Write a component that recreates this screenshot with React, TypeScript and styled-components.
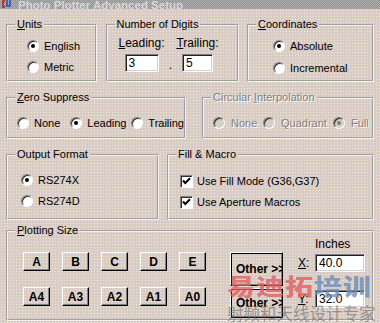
import React from 'react'
import styled, { createGlobalStyle } from 'styled-components'

const GlobalStyle = createGlobalStyle`
  html, body {
    margin: 0;
    padding: 0;
    background: #d6cdc8;
  }
`

const Window = styled.div`
  position: relative;
  width: 380px;
  height: 323px;
  overflow: hidden;
  background-color: #d8cbc8;
  background-image: radial-gradient(circle, #efeec2 0.7px, transparent 0.9px);
  background-size: 3px 3px;
  font-family: "Liberation Sans", Arial, sans-serif;
  font-size: 11px;
  color: #000;
`

const TitleBar = styled.div`
  height: 9px;
  overflow: hidden;
  display: flex;
  align-items: flex-end;
  gap: 7px;
  padding-left: 2px;
  background: repeating-conic-gradient(#8e8e8e 0 25%, #b4b4b4 0 50%) 0 0 / 2px 2px;
`

const TitleText = styled.span`
  font-weight: bold;
  font-size: 11.5px;
  line-height: 12px;
  color: #d8d8d8;
  margin-bottom: -2px;
`

const Body = styled.div`
  padding: 9px 6px 0 6px;
`

const Row = styled.div<{ $top?: number }>`
  display: flex;
  justify-content: space-between;
  align-items: flex-start;
  margin-top: ${(p) => p.$top ?? 0}px;
`

const Group = styled.fieldset<{ $w: number; $h: number }>`
  margin: 0;
  padding: 0;
  min-width: 0;
  box-sizing: border-box;
  width: ${(p) => p.$w}px;
  height: ${(p) => p.$h}px;
  border: 2px groove #f4f2f0;
`

const Legend = styled.legend<{ $disabled?: boolean }>`
  padding: 0 2px;
  margin-left: 7px;
  font-size: 11px;
  line-height: 13px;
  color: ${(p) => (p.$disabled ? '#808080' : '#000')};
  text-shadow: ${(p) => (p.$disabled ? '1px 1px 0 #fff' : 'none')};
`

const Key = styled.span`
  text-decoration: underline;
  text-underline-offset: 1px;
`

const Stack = styled.div<{ $pt: number; $pl: number; $gap: number }>`
  display: flex;
  flex-direction: column;
  gap: ${(p) => p.$gap}px;
  padding: ${(p) => p.$pt}px 0 0 ${(p) => p.$pl}px;
`

const Line = styled.div<{ $pt: number; $pl: number }>`
  display: flex;
  align-items: center;
  padding: ${(p) => p.$pt}px 0 0 ${(p) => p.$pl}px;
`

const Choice = styled.label<{ $w?: number; $gap?: number; $disabled?: boolean }>`
  display: flex;
  align-items: center;
  gap: ${(p) => p.$gap ?? (p.$disabled ? 6 : 5)}px;
  height: 20px;
  width: ${(p) => (p.$w ? `${p.$w}px` : 'auto')};
  color: ${(p) => (p.$disabled ? '#808080' : '#000')};
  text-shadow: ${(p) => (p.$disabled ? '1px 1px 0 #fff' : 'none')};
  white-space: nowrap;
`

const RadioDot = styled.span<{ $on?: boolean; $disabled?: boolean }>`
  position: relative;
  flex: none;
  width: 12px;
  height: 12px;
  box-sizing: border-box;
  border-radius: 50%;
  border: 1px solid;
  border-color: #808080 #ffffff #ffffff #808080;
  box-shadow: inset 1px 1px 0 #303030;
  background: ${(p) => (p.$disabled ? '#d4d0c8' : '#fff')};

  &::after {
    content: '';
    display: ${(p) => (p.$on ? 'block' : 'none')};
    position: absolute;
    left: 3px;
    top: 3px;
    width: 4px;
    height: 4px;
    border-radius: 50%;
    background: ${(p) => (p.$disabled ? '#808080' : '#000')};
  }
`

const CheckBox = styled.span`
  flex: none;
  display: flex;
  width: 13px;
  height: 13px;
  box-sizing: border-box;
  border: 1px solid;
  border-color: #808080 #ffffff #ffffff #808080;
  box-shadow: inset 1px 1px 0 #303030;
  background: #fff;
`

const Field = styled.div<{ $w: number }>`
  width: ${(p) => p.$w}px;
  height: 18px;
  box-sizing: border-box;
  border: 1px solid;
  border-color: #808080 #ffffff #ffffff #808080;
  box-shadow: inset 1px 1px 0 #202020, inset -1px -1px 0 #d4d0c8;
  background: #fff;
  padding: 0 3px;
  font-size: 12px;
  line-height: 16px;
`

const Digits = styled.div`
  display: flex;
  align-items: flex-end;
  padding: 6px 0 0 14px;
`

const DigitCol = styled.div<{ $w: number }>`
  display: flex;
  flex-direction: column;
  align-items: center;
  gap: 4px;
  width: ${(p) => p.$w}px;
  font-size: 12px;
  line-height: 13px;
`

const Dot = styled.span`
  width: 18px;
  text-align: center;
  line-height: 14px;
  font-size: 12px;
`

const Plot = styled.div`
  display: flex;
  align-items: flex-start;
  padding-left: 15px;
`

const SizeGrid = styled.div`
  display: grid;
  grid-template-columns: repeat(5, 27px);
  grid-auto-rows: 19px;
  column-gap: 12px;
  row-gap: 16px;
  margin-top: 15px;
`

const RaisedButton = styled.button`
  margin: 0;
  padding: 0;
  box-sizing: border-box;
  background: transparent;
  border: 1px solid;
  border-color: #ffffff #000000 #000000 #ffffff;
  box-shadow: inset -1px -1px 0 #808080;
  font-family: "Liberation Sans", Arial, sans-serif;
  font-weight: bold;
  font-size: 12px;
  color: #000;
`

const OtherCol = styled.div`
  display: flex;
  flex-direction: column;
  gap: 2px;
  margin: 15px 0 0 24px;
`

const OtherButton = styled(RaisedButton)<{ $h: number }>`
  width: 53px;
  height: ${(p) => p.$h}px;
  box-shadow: inset 1px 1px 0 #000, inset -1px -1px 0 #808080;
  text-align: left;
  padding-left: 5px;
  white-space: nowrap;
  overflow: hidden;
`

const Extent = styled.div`
  display: grid;
  grid-template-columns: 17px 50px;
  grid-template-rows: 14px 18px 18px;
  row-gap: 3px;
  margin-left: 15px;
  align-items: center;
  font-size: 12px;
`

const Axis = styled.span<{ $shift?: number }>`
  line-height: 18px;
  align-self: start;
  margin-top: ${(p) => p.$shift ?? 0}px;
`

const LowField = styled(Field)<{ $shift?: number }>`
  align-self: start;
  margin-top: ${(p) => p.$shift ?? 0}px;
`

const Watermark = styled.div`
  position: absolute;
  left: 227px;
  top: 273px;
  pointer-events: none;
  font-family: "Noto Sans CJK SC", sans-serif;
  white-space: nowrap;
`

const MarkTitle = styled.div`
  font-size: 28px;
  font-weight: 900;
  line-height: 30px;
  letter-spacing: 1px;
  transform: scaleY(0.8);
  transform-origin: left top;
`

const Red = styled.span`
  color: rgba(224, 96, 100, 0.8);
`

const Blue = styled.span`
  color: rgba(108, 140, 188, 0.8);
`

const MarkSub = styled.div`
  margin-top: 1px;
  font-size: 16.5px;
  line-height: 18px;
  color: rgba(110, 110, 110, 0.65);
`

const Radio = ({ label, on, w, disabled }: { label: string; on?: boolean; w?: number; disabled?: boolean }) => (
  <Choice $w={w} $disabled={disabled}>
    <RadioDot $on={on} $disabled={disabled} />
    {label}
  </Choice>
)

const Check = ({ label }: { label: string }) => (
  <Choice $gap={4}>
    <CheckBox>
      <svg width="11" height="11" viewBox="0 0 11 11">
        <path d="M2 4.5 L4.3 7 L9 2.3" stroke="#000" strokeWidth="2" fill="none" />
      </svg>
    </CheckBox>
    {label}
  </Choice>
)

const App = () => {
  const sizes = ['A', 'B', 'C', 'D', 'E', 'A4', 'A3', 'A2', 'A1', 'A0']

  return (
    <Window>
      <GlobalStyle />
      <TitleBar>
        <svg width="9" height="9" viewBox="0 0 9 9">
          <path d="M3 1 H1 V7 H3" stroke="#c01818" strokeWidth="1.5" fill="none" />
          <path d="M5 0 V6 H8 V0" stroke="#2050c0" strokeWidth="1.5" fill="none" />
        </svg>
        <TitleText>Photo Plotter Advanced Setup</TitleText>
      </TitleBar>

      <Body>
        <Row>
          <Group $w={91} $h={64}>
            <Legend><Key>U</Key>nits</Legend>
            <Stack $pt={5} $pl={19} $gap={1}>
              <Radio label="English" on />
              <Radio label="Metric" />
            </Stack>
          </Group>
          <Group $w={133} $h={64}>
            <Legend>Number of Digits</Legend>
            <Digits>
              <DigitCol $w={40}>
                <span><Key>L</Key>eading:</span>
                <Field $w={34}>3</Field>
              </DigitCol>
              <Dot>.</Dot>
              <DigitCol $w={36}>
                <span><Key>T</Key>railing:</span>
                <Field $w={31}>5</Field>
              </DigitCol>
            </Digits>
          </Group>
          <Group $w={127} $h={64}>
            <Legend><Key>C</Key>oordinates</Legend>
            <Stack $pt={5} $pl={24} $gap={2}>
              <Radio label="Absolute" on />
              <Radio label="Incremental" />
            </Stack>
          </Group>
        </Row>

        <Row $top={9}>
          <Group $w={180} $h={48}>
            <Legend><Key>Z</Key>ero Suppress</Legend>
            <Line $pt={9} $pl={9}>
              <Radio label="None" w={55} />
              <Radio label="Leading" on w={63} />
              <Radio label="Trailing" />
            </Line>
          </Group>
          <Group $w={172} $h={48}>
            <Legend $disabled>Circular <Key>I</Key>nterpolation</Legend>
            <Line $pt={9} $pl={9}>
              <Radio label="None" w={50} disabled />
              <Radio label="Quadrant" w={70} disabled />
              <Radio label="Full" on disabled />
            </Line>
          </Group>
        </Row>

        <Row $top={9}>
          <Group $w={153} $h={72}>
            <Legend>Output Format</Legend>
            <Stack $pt={9} $pl={13} $gap={1}>
              <Radio label="RS274X" on />
              <Radio label="RS274D" />
            </Stack>
          </Group>
          <Group $w={207} $h={72}>
            <Legend>Fill &amp; Macro</Legend>
            <Stack $pt={10} $pl={11} $gap={1}>
              <Check label="Use Fill Mode (G36,G37)" />
              <Check label="Use Aperture Macros" />
            </Stack>
          </Group>
        </Row>

        <Row $top={4}>
          <Group $w={368} $h={97}>
            <Legend><Key>P</Key>lotting Size</Legend>
            <Plot>
              <SizeGrid>
                {sizes.map((s) => (
                  <RaisedButton key={s}>{s}</RaisedButton>
                ))}
              </SizeGrid>
              <OtherCol>
                <OtherButton $h={34}>Other &gt;&gt;</OtherButton>
                <OtherButton $h={30}>Other &gt;&gt;</OtherButton>
              </OtherCol>
              <Extent>
                <span />
                <span>Inches</span>
                <Axis><Key>X</Key>:</Axis>
                <Field $w={50}>40.0</Field>
                <Axis $shift={15}><Key>Y</Key>:</Axis>
                <LowField $w={50} $shift={15}>32.0</LowField>
              </Extent>
            </Plot>
          </Group>
        </Row>
      </Body>

      <Watermark>
        <MarkTitle>
          <Red>易迪拓</Red>
          <Blue>培训</Blue>
        </MarkTitle>
        <MarkSub>射频和天线设计专家</MarkSub>
      </Watermark>
    </Window>
  )
}

export default App
